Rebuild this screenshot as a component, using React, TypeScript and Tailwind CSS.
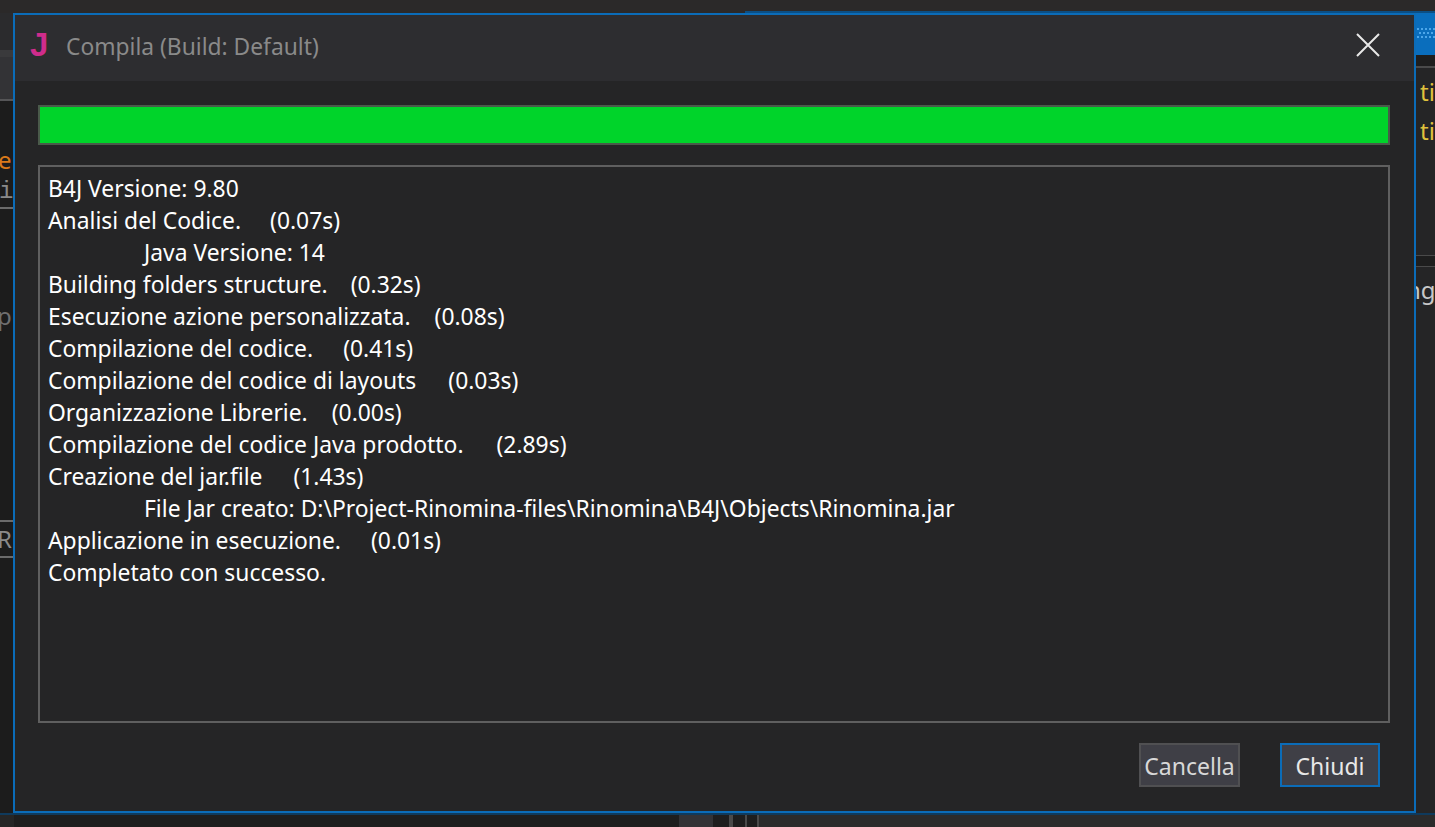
const FONT = "font-['Noto_Sans','Open_Sans',sans-serif]"

const logLines = [
  { text: "B4J Versione: 9.80" },
  { text: "Analisi del Codice.", time: "(0.07s)", gap: "ml-[29px]" },
  { text: "Java Versione: 14", indent: true },
  { text: "Building folders structure.", time: "(0.32s)", gap: "ml-[23px]" },
  { text: "Esecuzione azione personalizzata.", time: "(0.08s)", gap: "ml-[24px]" },
  { text: "Compilazione del codice.", time: "(0.41s)", gap: "ml-[30px]" },
  { text: "Compilazione del codice di layouts", time: "(0.03s)", gap: "ml-[32px]" },
  { text: "Organizzazione Librerie.", time: "(0.00s)", gap: "ml-[24px]" },
  { text: "Compilazione del codice Java prodotto.", time: "(2.89s)", gap: "ml-[33px]" },
  { text: "Creazione del jar.file", time: "(1.43s)", gap: "ml-[31px]" },
  { text: "File Jar creato: D:\\Project-Rinomina-files\\Rinomina\\B4J\\Objects\\Rinomina.jar", indent: true },
  { text: "Applicazione in esecuzione.", time: "(0.01s)", gap: "ml-[30px]" },
  { text: "Completato con successo." },
]

function LeftStrip() {
  return (
    <div className="flex h-full w-[13px] flex-col overflow-hidden bg-[#1c1c1c] text-[24px] leading-[32px]">
      <div className="h-[37px] shrink-0 bg-[#2b2b2d]" />
      <div className="h-[7px] shrink-0 bg-[#3a3a3c]" />
      <div className="h-[42px] shrink-0 bg-[#333336]" />
      <div className="h-[2px] shrink-0 bg-[#555557]" />
      <div className="h-[43px] shrink-0" />
      <div className="h-[32px] shrink-0 whitespace-nowrap text-[#d9791a]">
        <div className="ml-[-2px]">e</div>
      </div>
      <div className="h-[33px] shrink-0 whitespace-nowrap border-b-2 border-[#6a6a6a] font-['Liberation_Mono',monospace] text-[#8a8a8a]">
        <div className="ml-[-1px]">i</div>
      </div>
      <div className="h-[91px] shrink-0" />
      <div className="h-[32px] shrink-0 text-[#6f6f6f]">
        <div className="ml-[-3px]">p</div>
      </div>
      <div className="h-[188px] shrink-0" />
      <div className="h-[38px] shrink-0 border-y-2 border-[#6a6a6a] leading-[34px] text-[#8a8a8a]">
        <div className="ml-[-3px]">R</div>
      </div>
    </div>
  )
}

function RightStrip() {
  return (
    <div className="flex h-full flex-1 flex-col overflow-hidden bg-[#252526] text-[24px]">
      <div className="flex h-[42px] shrink-0 items-start bg-[#0a6ebd] pt-[14px]">
        <svg width="19" height="14" viewBox="0 0 19 14" fill="#4ba6ea">
          <rect x="1" y="1" width="2" height="2" />
          <rect x="5" y="1" width="2" height="2" />
          <rect x="9" y="1" width="2" height="2" />
          <rect x="13" y="1" width="2" height="2" />
          <rect x="17" y="1" width="2" height="2" />
          <rect x="3" y="5" width="2" height="2" />
          <rect x="7" y="5" width="2" height="2" />
          <rect x="11" y="5" width="2" height="2" />
          <rect x="15" y="5" width="2" height="2" />
          <rect x="1" y="9" width="2" height="2" />
          <rect x="5" y="9" width="2" height="2" />
          <rect x="9" y="9" width="2" height="2" />
          <rect x="13" y="9" width="2" height="2" />
          <rect x="17" y="9" width="2" height="2" />
        </svg>
      </div>
      <div className="h-[11px] shrink-0 bg-[#1e1e1e]" />
      <div className="h-[2px] shrink-0 bg-[#4a4a4a]" />
      <div className="h-[4px] shrink-0" />
      <div className="h-[39px] shrink-0 pl-[4px] leading-[40px] text-[#e0c23c]">ti</div>
      <div className="h-[41px] shrink-0 pl-[4px] leading-[40px] text-[#e0c23c]">ti</div>
      <div className="h-[103px] shrink-0" />
      <div className="h-[12px] shrink-0 border-y border-[#4a4a4a] bg-[#1e1e1e]" />
      <div className="h-[7px] shrink-0" />
      <div className="h-[32px] shrink-0 whitespace-nowrap leading-[32px] text-[#c8c8c8]">
        <div className="ml-[-10px]">ng</div>
      </div>
    </div>
  )
}

function Dialog() {
  return (
    <div className="flex h-full w-[1403px] flex-col border-2 border-[#0b6cb8] bg-[#252526]">
      <div className="flex h-[66px] shrink-0 items-center bg-[#2d2d30] pl-[15px] pr-[34px]">
        <span className="mb-[8px] w-[36px] font-['Liberation_Sans',sans-serif] text-[33px] font-bold leading-none text-[#d02c8c]">J</span>
        <span className="mb-[1px] text-[22.8px] text-[#8a8a8a]">Compila (Build: Default)</span>
        <svg className="mb-[6px] ml-auto" width="24" height="24" viewBox="0 0 24 24" fill="none" stroke="#e8e8e8" strokeWidth="2">
          <path d="M1 1 L23 23 M23 1 L1 23" />
        </svg>
      </div>
      <div className="flex flex-1 flex-col pb-6 pl-[23px] pr-[24px] pt-6">
        <div className="h-[40px] border-2 border-[#4a5a4a] bg-[#00d42a]" />
        <div className="mt-5 h-[558px] border-2 border-[#5f5f5f] pl-2 pt-[6px] text-[22.85px] leading-[32px] text-white">
          {logLines.map((line) => (
            <div key={line.text} className={line.indent ? "whitespace-nowrap pl-[96px]" : "whitespace-nowrap"}>
              {line.text}
              {line.time && <span className={line.gap}>{line.time}</span>}
            </div>
          ))}
        </div>
        <div className="mt-5 flex justify-end gap-10 pr-[10px]">
          <button className="h-[44px] w-[101px] border-2 border-[#505052] bg-[#3f3f46] pt-[2px] text-[23px] text-[#d8d8d8]">Cancella</button>
          <button className="h-[44px] w-[100px] border-2 border-[#0b6cb8] bg-[#3f3f46] pt-[2px] text-[23px] text-[#e8e8e8]">Chiudi</button>
        </div>
      </div>
    </div>
  )
}

export default function App() {
  return (
    <div className={`flex h-[827px] w-[1435px] flex-col overflow-hidden bg-[#252526] ${FONT}`}>
      <div className="flex h-[13px] shrink-0 items-end bg-[#2b2929]">
        <div className="ml-[745px] h-[2px] flex-1 bg-[#0b4f85]" />
      </div>
      <div className="flex h-[800px] shrink-0">
        <LeftStrip />
        <Dialog />
        <RightStrip />
      </div>
      <div className="flex h-[14px] shrink-0 flex-col">
        <div className="h-[2px] shrink-0 bg-[#0f3a5c]" />
        <div className="flex flex-1 bg-[#1e1e1e]">
          <div className="h-full w-[14px] bg-[#262626]" />
          <div className="ml-[665px] h-full w-[34px] bg-[#333336]" />
          <div className="ml-[16px] h-full w-[4px] bg-[#4a4a4a]" />
          <div className="ml-[12px] h-full w-[2px] bg-[#4a4a4a]" />
          <div className="ml-[10px] h-full w-[2px] bg-[#4a4a4a]" />
          <div className="h-full flex-1 bg-[#2b2b2b]" />
        </div>
      </div>
    </div>
  )
}
